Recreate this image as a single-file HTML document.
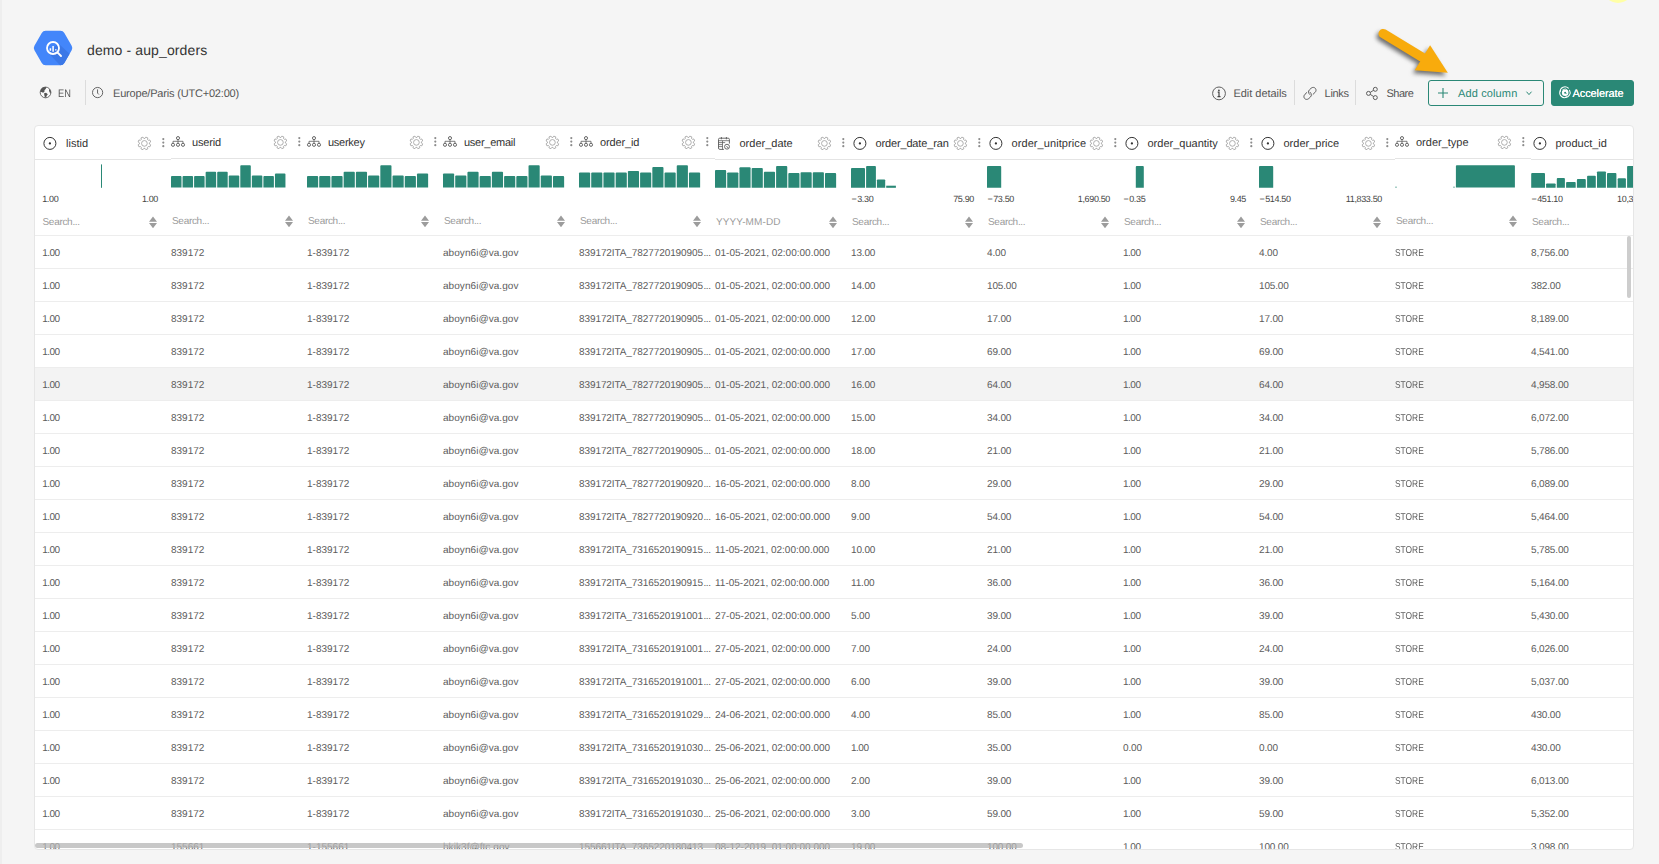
<!DOCTYPE html>
<html lang="en"><head><meta charset="utf-8"><title>demo - aup_orders</title>
<style>
html,body{margin:0;padding:0}
body{width:1659px;height:864px;overflow:hidden;background:#f5f5f5;font-family:'Liberation Sans', sans-serif;position:relative;color:#555;text-rendering:geometricPrecision}
.a{position:absolute;white-space:nowrap}
.strip{left:0;top:0;width:2px;height:864px;background:#eeeeee}
.title{left:87px;top:40.5px;font-size:14px;line-height:18px;color:#333;letter-spacing:0.12px}
.tb{font-size:11px;line-height:14px;top:87px;color:#555}
.vdiv{width:1px;background:#dcdcdc;top:80px;height:25px}
.btn{top:80px;height:24px;border:1px solid #2a8876;border-radius:3px;box-sizing:content-box}
.tbl{left:34px;top:125px;width:1598px;height:723px;border:1px solid #e6e6e6;border-radius:4px;background:#fff;overflow:hidden}
.hl{font-size:11px;line-height:14px;color:#333}
.mm{font-size:9px;line-height:12px;color:#444;letter-spacing:-0.35px}
.ms{margin-right:0.9px;color:#222}
.se{font-size:10px;line-height:12px;color:#9a9a9a;letter-spacing:-0.3px}
.row{left:0;width:1598px;height:32px;border-top:1px solid #ededed}
.c{position:absolute;top:1px;height:32px;line-height:33px;font-size:10px;color:#5c5c5c;white-space:nowrap}
.n{letter-spacing:-0.15px}
.n1{letter-spacing:-0.5px}
.u{transform:scaleX(0.84);transform-origin:0 0}
.e{letter-spacing:0.06px}
.d{letter-spacing:0px}
.o{letter-spacing:-0.09px}
.el{letter-spacing:-0.35px;margin-left:0.4px}
.hline{height:1px;background:#e4e4e4}

</style></head><body>
<div class="a strip"></div>
<div class="a" style="left:1603px;top:-27px;width:30px;height:30px;border-radius:50%;background:#ffffa6;filter:blur(0.7px)"></div>
<svg class="a" style="left:30px;top:27px" width="48" height="44" viewBox="30 27 48 44">
<defs><clipPath id="hexclip"><path d="M41.76 32.96Q43.05 30.70 45.65 30.70L60.45 30.70Q63.05 30.70 64.34 32.96L71.66 45.69Q72.95 47.95 71.66 50.21L64.34 62.94Q63.05 65.20 60.45 65.20L45.65 65.20Q43.05 65.20 41.76 62.94L34.44 50.21Q33.15 47.95 34.44 45.69Z"/></clipPath></defs>
<path d="M41.76 32.96Q43.05 30.70 45.65 30.70L60.45 30.70Q63.05 30.70 64.34 32.96L71.66 45.69Q72.95 47.95 71.66 50.21L64.34 62.94Q63.05 65.20 60.45 65.20L45.65 65.20Q43.05 65.20 41.76 62.94L34.44 50.21Q33.15 47.95 34.44 45.69Z" fill="#4386fa"/>
<g clip-path="url(#hexclip)"><path d="M48.6 53.2 L58.2 43.2 L80 63.6 L80 72 L66.5 72 Z" fill="#3b78e7"/></g>
<circle cx="53.0" cy="48.0" r="6.0" fill="none" stroke="#fff" stroke-width="1.8"/>
<path d="M57.7 52.7 L61.0 56.0" stroke="#fff" stroke-width="1.9" stroke-linecap="round"/>
<path d="M50.4 48.2V50.7M53.1 46.1V51.8M55.8 49.2V50.6" stroke="#fff" stroke-width="1.5"/>
</svg>
<div class="a title">demo - aup_orders</div>
<svg class="a" style="left:38px;top:85px" width="70" height="16" viewBox="38 85 70 16">
<circle cx="45.55" cy="92.45" r="5.35" fill="#fbfbfb" stroke="#5a5a5a" stroke-width="0.9"/>
<path d="M40.4 92.2L41 89L43 87.3L46.1 87L45.9 88.7L44.5 90.2L44.4 91.9L43 92.8L41.7 92Z" fill="#555"/>
<path d="M44.1 93.3L46 92.8L47.8 94.2L46.7 95.7L45.9 97.7L44.8 97L44.3 95.1Z" fill="#555"/>
<path d="M49.6 88.8L51 91.7L50.6 93.4L49.4 92L49 90.2Z" fill="#555"/>
<circle cx="97.6" cy="92.55" r="5.1" fill="none" stroke="#555" stroke-width="0.9"/>
<path d="M97.55 89.4V93.1L98.9 94.5" fill="none" stroke="#555" stroke-width="0.9"/>
</svg>
<div class="a tb" style="left:58.2px;transform:scaleX(0.84);transform-origin:0 0">EN</div>
<div class="a vdiv" style="left:85px"></div>
<div class="a tb" style="left:113px;letter-spacing:-0.19px">Europe/Paris (UTC+02:00)</div>
<svg class="a" style="left:1208px;top:83px" width="176" height="20" viewBox="1208 83 176 20">
<circle cx="1219" cy="93.4" r="6.4" fill="none" stroke="#555" stroke-width="0.95"/>
<circle cx="1218.9" cy="90.3" r="0.9" fill="#444"/><path d="M1217.7 92.2H1219V96.6M1217.5 96.7H1220.5" fill="none" stroke="#444" stroke-width="1.2"/>
<g transform="translate(1309.95 93.4) scale(0.9) translate(-1309.9 -93.45)" fill="none" stroke="#555" stroke-width="1.05" stroke-linecap="round"><path d="M1309.6 94.6C1307.9 93 1307.9 91 1309.3 89.5L1311.2 87.7C1312.8 86.3 1315 86.6 1316 88C1317 89.4 1316.8 91.2 1315.4 92.5L1313.4 94.4"/><path d="M1310.2 92.3C1311.9 93.9 1311.9 95.9 1310.5 97.4L1308.6 99.2C1307 100.6 1304.8 100.3 1303.8 98.9C1302.8 97.5 1303 95.7 1304.4 94.4L1306.4 92.5"/></g>
<g fill="none" stroke="#555" stroke-width="0.95"><circle cx="1375.3" cy="89.3" r="2"/><circle cx="1368.5" cy="93.4" r="2"/><circle cx="1375.3" cy="97.6" r="2"/><path d="M1370.2 92.4L1373.6 90.3M1370.2 94.4L1373.6 96.5"/></g>
</svg>
<div class="a tb" style="left:1233.5px;letter-spacing:-0.04px">Edit details</div>
<div class="a vdiv" style="left:1294px"></div>
<div class="a tb" style="left:1324.6px;letter-spacing:-0.3px">Links</div>
<div class="a vdiv" style="left:1355px"></div>
<div class="a tb" style="left:1386.4px;letter-spacing:-0.47px">Share</div>
<div class="a btn" style="left:1428px;width:114px;background:transparent"></div>
<svg class="a" style="left:1436px;top:86px" width="100" height="14" viewBox="0 0 100 14"><path d="M2 7H12M7 2V12" stroke="#2a8876" stroke-width="1.1" fill="none"/><path d="M90.5 5.7L93 8.6L95.5 5.7" stroke="#2a8876" stroke-width="1" fill="none"/></svg>
<div class="a tb" style="left:1458px;color:#2a8876;letter-spacing:0.13px">Add column</div>
<div class="a btn" style="left:1551px;width:81px;background:#2a8876"></div>
<svg class="a" style="left:1556px;top:84px" width="18" height="18" viewBox="1556 84 18 18"><g transform="translate(1564.9 92.7) scale(0.86) translate(-1565 -92.9)"><g fill="none" stroke="#fff" stroke-linecap="round"><circle cx="1565.3" cy="93.0" r="2.5" stroke-width="2.7"/><path d="M1569.0 87.7A5.5 5.3 0 0 0 1559.5 91.6" stroke-width="1.2"/><path d="M1559.6 90.6A5.6 5.6 0 0 0 1567.2 98.0" stroke-width="1.25"/><path d="M1570.4 90.0A5.4 5.4 0 0 1 1565.6 98.1" stroke-width="1.2"/><path d="M1562.6 89.2A4.4 4.4 0 0 1 1568.6 90.4" stroke-width="0.9"/></g><path d="M1566.3 94.4A1.6 1.6 0 0 0 1567.2 93.2" stroke="#2a8876" stroke-width="0.6" fill="none"/></g></svg>
<div class="a tb" style="left:1572.5px;color:#fff;letter-spacing:-0.1px;text-shadow:0 0 0.4px #fff">Accelerate</div>
<svg class="a" style="left:1360px;top:15px;filter:drop-shadow(-1.6px 3px 2px rgba(60,60,60,0.72))" width="110" height="75" viewBox="1360 15 110 75">
<path d="M1383.2 33.6 L1421.8 57" stroke="#f8ab0c" stroke-width="9.4" stroke-linecap="round" fill="none"/>
<path d="M1430.1 45.2 L1414.7 70.3 L1447.8 72.7 Z" fill="#f8ab0c"/>
</svg>
<div class="a tbl">
<svg class="a" style="left:0;top:0" width="1598" height="110" viewBox="35 126 1598 110">
<rect x="35" y="159" width="136" height="1" fill="#e4e4e4"/>
<circle cx="49.9" cy="143.4" r="6" fill="none" stroke="#333" stroke-width="1"/><circle cx="49.9" cy="143.4" r="1.15" fill="#333"/>
<path d="M144.97 138.43 L145.85 137.12 L147.82 137.93 L147.51 139.49 L148.31 140.29 L149.87 139.98 L150.68 141.95 L149.37 142.83 L149.37 143.97 L150.68 144.85 L149.87 146.82 L148.31 146.51 L147.51 147.31 L147.82 148.87 L145.85 149.68 L144.97 148.37 L143.83 148.37 L142.95 149.68 L140.98 148.87 L141.29 147.31 L140.49 146.51 L138.93 146.82 L138.12 144.85 L139.43 143.97 L139.43 142.83 L138.12 141.95 L138.93 139.98 L140.49 140.29 L141.29 139.49 L140.98 137.93 L142.95 137.12 L143.83 138.43Z" fill="none" stroke="#a6a6a6" stroke-width="0.9" stroke-linejoin="round"/><circle cx="144.4" cy="143.4" r="2.85" fill="none" stroke="#a6a6a6" stroke-width="0.9"/>
<circle cx="163.3" cy="139.04999999999998" r="1.1" fill="#8c8c8c"/><circle cx="163.3" cy="142.6" r="1.1" fill="#8c8c8c"/><circle cx="163.3" cy="146.15" r="1.1" fill="#8c8c8c"/>
<rect x="101.00" y="164.40" width="1.0" height="23.4" fill="#2a8876"/>
<path d="M149.0 221.70000000000002L153.0 216.6L157.0 221.70000000000002ZM149.0 223.1L153.0 228.20000000000002L157.0 223.1Z" fill="#9c9c9c"/>
<rect x="171" y="158" width="136" height="1" fill="#e4e4e4"/>
<g fill="none" stroke="#5e5e5e" stroke-width="0.95"><circle cx="178" cy="138.1" r="1.55"/><circle cx="173.0" cy="144.8" r="1.55"/><circle cx="178.0" cy="144.8" r="1.55"/><circle cx="183.0" cy="144.8" r="1.55"/><path d="M178 139.7V141.3M173.0 143.2V141.3H183.0V143.2M178 141.3V143.2" stroke-width="0.8"/></g>
<path d="M280.97 137.43 L281.85 136.12 L283.82 136.93 L283.51 138.49 L284.31 139.29 L285.87 138.98 L286.68 140.95 L285.37 141.83 L285.37 142.97 L286.68 143.85 L285.87 145.82 L284.31 145.51 L283.51 146.31 L283.82 147.87 L281.85 148.68 L280.97 147.37 L279.83 147.37 L278.95 148.68 L276.98 147.87 L277.29 146.31 L276.49 145.51 L274.93 145.82 L274.12 143.85 L275.43 142.97 L275.43 141.83 L274.12 140.95 L274.93 138.98 L276.49 139.29 L277.29 138.49 L276.98 136.93 L278.95 136.12 L279.83 137.43Z" fill="none" stroke="#a6a6a6" stroke-width="0.9" stroke-linejoin="round"/><circle cx="280.4" cy="142.4" r="2.85" fill="none" stroke="#a6a6a6" stroke-width="0.9"/>
<circle cx="299.3" cy="138.04999999999998" r="1.1" fill="#8c8c8c"/><circle cx="299.3" cy="141.6" r="1.1" fill="#8c8c8c"/><circle cx="299.3" cy="145.15" r="1.1" fill="#8c8c8c"/>
<path d="M171.00 187.40V176.90Q171.00 176.00 171.90 176.00H180.60Q181.50 176.00 181.50 176.90V187.40Z" fill="#2a8876"/>
<path d="M182.55 187.40V176.90Q182.55 176.00 183.45 176.00H192.15Q193.05 176.00 193.05 176.90V187.40Z" fill="#2a8876"/>
<path d="M194.10 187.40V176.90Q194.10 176.00 195.00 176.00H203.70Q204.60 176.00 204.60 176.90V187.40Z" fill="#2a8876"/>
<path d="M205.65 187.40V172.70Q205.65 171.80 206.55 171.80H215.25Q216.15 171.80 216.15 172.70V187.40Z" fill="#2a8876"/>
<path d="M217.20 187.40V172.70Q217.20 171.80 218.10 171.80H226.80Q227.70 171.80 227.70 172.70V187.40Z" fill="#2a8876"/>
<path d="M228.75 187.40V176.50Q228.75 175.60 229.65 175.60H238.35Q239.25 175.60 239.25 176.50V187.40Z" fill="#2a8876"/>
<path d="M240.30 187.40V166.10Q240.30 165.20 241.20 165.20H249.90Q250.80 165.20 250.80 166.10V187.40Z" fill="#2a8876"/>
<path d="M251.85 187.40V176.50Q251.85 175.60 252.75 175.60H261.45Q262.35 175.60 262.35 176.50V187.40Z" fill="#2a8876"/>
<path d="M263.40 187.40V176.90Q263.40 176.00 264.30 176.00H273.00Q273.90 176.00 273.90 176.90V187.40Z" fill="#2a8876"/>
<path d="M274.95 187.40V174.40Q274.95 173.50 275.85 173.50H284.55Q285.45 173.50 285.45 174.40V187.40Z" fill="#2a8876"/>
<path d="M285.0 220.70000000000002L289.0 215.6L293.0 220.70000000000002ZM285.0 222.1L289.0 227.20000000000002L293.0 222.1Z" fill="#9c9c9c"/>
<rect x="307" y="158" width="136" height="1" fill="#e4e4e4"/>
<g fill="none" stroke="#5e5e5e" stroke-width="0.95"><circle cx="314" cy="138.1" r="1.55"/><circle cx="309.0" cy="144.8" r="1.55"/><circle cx="314.0" cy="144.8" r="1.55"/><circle cx="319.0" cy="144.8" r="1.55"/><path d="M314 139.7V141.3M309.0 143.2V141.3H319.0V143.2M314 141.3V143.2" stroke-width="0.8"/></g>
<path d="M416.97 137.43 L417.85 136.12 L419.82 136.93 L419.51 138.49 L420.31 139.29 L421.87 138.98 L422.68 140.95 L421.37 141.83 L421.37 142.97 L422.68 143.85 L421.87 145.82 L420.31 145.51 L419.51 146.31 L419.82 147.87 L417.85 148.68 L416.97 147.37 L415.83 147.37 L414.95 148.68 L412.98 147.87 L413.29 146.31 L412.49 145.51 L410.93 145.82 L410.12 143.85 L411.43 142.97 L411.43 141.83 L410.12 140.95 L410.93 138.98 L412.49 139.29 L413.29 138.49 L412.98 136.93 L414.95 136.12 L415.83 137.43Z" fill="none" stroke="#a6a6a6" stroke-width="0.9" stroke-linejoin="round"/><circle cx="416.4" cy="142.4" r="2.85" fill="none" stroke="#a6a6a6" stroke-width="0.9"/>
<circle cx="435.3" cy="138.04999999999998" r="1.1" fill="#8c8c8c"/><circle cx="435.3" cy="141.6" r="1.1" fill="#8c8c8c"/><circle cx="435.3" cy="145.15" r="1.1" fill="#8c8c8c"/>
<path d="M307.00 187.40V176.90Q307.00 176.00 307.90 176.00H317.25Q318.15 176.00 318.15 176.90V187.40Z" fill="#2a8876"/>
<path d="M319.22 187.40V176.90Q319.22 176.00 320.12 176.00H329.47Q330.37 176.00 330.37 176.90V187.40Z" fill="#2a8876"/>
<path d="M331.44 187.40V176.90Q331.44 176.00 332.34 176.00H341.69Q342.59 176.00 342.59 176.90V187.40Z" fill="#2a8876"/>
<path d="M343.66 187.40V172.70Q343.66 171.80 344.56 171.80H353.91Q354.81 171.80 354.81 172.70V187.40Z" fill="#2a8876"/>
<path d="M355.88 187.40V172.70Q355.88 171.80 356.78 171.80H366.13Q367.03 171.80 367.03 172.70V187.40Z" fill="#2a8876"/>
<path d="M368.10 187.40V176.50Q368.10 175.60 369.00 175.60H378.35Q379.25 175.60 379.25 176.50V187.40Z" fill="#2a8876"/>
<path d="M380.32 187.40V166.10Q380.32 165.20 381.22 165.20H390.57Q391.47 165.20 391.47 166.10V187.40Z" fill="#2a8876"/>
<path d="M392.54 187.40V176.50Q392.54 175.60 393.44 175.60H402.79Q403.69 175.60 403.69 176.50V187.40Z" fill="#2a8876"/>
<path d="M404.76 187.40V176.90Q404.76 176.00 405.66 176.00H415.01Q415.91 176.00 415.91 176.90V187.40Z" fill="#2a8876"/>
<path d="M416.98 187.40V174.40Q416.98 173.50 417.88 173.50H427.23Q428.13 173.50 428.13 174.40V187.40Z" fill="#2a8876"/>
<path d="M421.0 220.70000000000002L425.0 215.6L429.0 220.70000000000002ZM421.0 222.1L425.0 227.20000000000002L429.0 222.1Z" fill="#9c9c9c"/>
<rect x="443" y="158" width="136" height="1" fill="#e4e4e4"/>
<g fill="none" stroke="#5e5e5e" stroke-width="0.95"><circle cx="450" cy="138.1" r="1.55"/><circle cx="445.0" cy="144.8" r="1.55"/><circle cx="450.0" cy="144.8" r="1.55"/><circle cx="455.0" cy="144.8" r="1.55"/><path d="M450 139.7V141.3M445.0 143.2V141.3H455.0V143.2M450 141.3V143.2" stroke-width="0.8"/></g>
<path d="M552.97 137.43 L553.85 136.12 L555.82 136.93 L555.51 138.49 L556.31 139.29 L557.87 138.98 L558.68 140.95 L557.37 141.83 L557.37 142.97 L558.68 143.85 L557.87 145.82 L556.31 145.51 L555.51 146.31 L555.82 147.87 L553.85 148.68 L552.97 147.37 L551.83 147.37 L550.95 148.68 L548.98 147.87 L549.29 146.31 L548.49 145.51 L546.93 145.82 L546.12 143.85 L547.43 142.97 L547.43 141.83 L546.12 140.95 L546.93 138.98 L548.49 139.29 L549.29 138.49 L548.98 136.93 L550.95 136.12 L551.83 137.43Z" fill="none" stroke="#a6a6a6" stroke-width="0.9" stroke-linejoin="round"/><circle cx="552.4" cy="142.4" r="2.85" fill="none" stroke="#a6a6a6" stroke-width="0.9"/>
<circle cx="571.3" cy="138.04999999999998" r="1.1" fill="#8c8c8c"/><circle cx="571.3" cy="141.6" r="1.1" fill="#8c8c8c"/><circle cx="571.3" cy="145.15" r="1.1" fill="#8c8c8c"/>
<path d="M443.00 187.40V174.40Q443.00 173.50 443.90 173.50H453.25Q454.15 173.50 454.15 174.40V187.40Z" fill="#2a8876"/>
<path d="M455.22 187.40V176.50Q455.22 175.60 456.12 175.60H465.47Q466.37 175.60 466.37 176.50V187.40Z" fill="#2a8876"/>
<path d="M467.44 187.40V172.70Q467.44 171.80 468.34 171.80H477.69Q478.59 171.80 478.59 172.70V187.40Z" fill="#2a8876"/>
<path d="M479.66 187.40V176.90Q479.66 176.00 480.56 176.00H489.91Q490.81 176.00 490.81 176.90V187.40Z" fill="#2a8876"/>
<path d="M491.88 187.40V172.70Q491.88 171.80 492.78 171.80H502.13Q503.03 171.80 503.03 172.70V187.40Z" fill="#2a8876"/>
<path d="M504.10 187.40V176.90Q504.10 176.00 505.00 176.00H514.35Q515.25 176.00 515.25 176.90V187.40Z" fill="#2a8876"/>
<path d="M516.32 187.40V176.90Q516.32 176.00 517.22 176.00H526.57Q527.47 176.00 527.47 176.90V187.40Z" fill="#2a8876"/>
<path d="M528.54 187.40V166.10Q528.54 165.20 529.44 165.20H538.79Q539.69 165.20 539.69 166.10V187.40Z" fill="#2a8876"/>
<path d="M540.76 187.40V176.50Q540.76 175.60 541.66 175.60H551.01Q551.91 175.60 551.91 176.50V187.40Z" fill="#2a8876"/>
<path d="M552.98 187.40V176.90Q552.98 176.00 553.88 176.00H563.23Q564.13 176.00 564.13 176.90V187.40Z" fill="#2a8876"/>
<path d="M557.0 220.70000000000002L561.0 215.6L565.0 220.70000000000002ZM557.0 222.1L561.0 227.20000000000002L565.0 222.1Z" fill="#9c9c9c"/>
<rect x="579" y="158" width="136" height="1" fill="#e4e4e4"/>
<g fill="none" stroke="#5e5e5e" stroke-width="0.95"><circle cx="586" cy="138.1" r="1.55"/><circle cx="581.0" cy="144.8" r="1.55"/><circle cx="586.0" cy="144.8" r="1.55"/><circle cx="591.0" cy="144.8" r="1.55"/><path d="M586 139.7V141.3M581.0 143.2V141.3H591.0V143.2M586 141.3V143.2" stroke-width="0.8"/></g>
<path d="M688.97 137.43 L689.85 136.12 L691.82 136.93 L691.51 138.49 L692.31 139.29 L693.87 138.98 L694.68 140.95 L693.37 141.83 L693.37 142.97 L694.68 143.85 L693.87 145.82 L692.31 145.51 L691.51 146.31 L691.82 147.87 L689.85 148.68 L688.97 147.37 L687.83 147.37 L686.95 148.68 L684.98 147.87 L685.29 146.31 L684.49 145.51 L682.93 145.82 L682.12 143.85 L683.43 142.97 L683.43 141.83 L682.12 140.95 L682.93 138.98 L684.49 139.29 L685.29 138.49 L684.98 136.93 L686.95 136.12 L687.83 137.43Z" fill="none" stroke="#a6a6a6" stroke-width="0.9" stroke-linejoin="round"/><circle cx="688.4" cy="142.4" r="2.85" fill="none" stroke="#a6a6a6" stroke-width="0.9"/>
<circle cx="707.3" cy="138.04999999999998" r="1.1" fill="#8c8c8c"/><circle cx="707.3" cy="141.6" r="1.1" fill="#8c8c8c"/><circle cx="707.3" cy="145.15" r="1.1" fill="#8c8c8c"/>
<path d="M579.00 187.40V173.50Q579.00 172.60 579.90 172.60H589.25Q590.15 172.60 590.15 173.50V187.40Z" fill="#2a8876"/>
<path d="M591.22 187.40V173.50Q591.22 172.60 592.12 172.60H601.47Q602.37 172.60 602.37 173.50V187.40Z" fill="#2a8876"/>
<path d="M603.44 187.40V173.50Q603.44 172.60 604.34 172.60H613.69Q614.59 172.60 614.59 173.50V187.40Z" fill="#2a8876"/>
<path d="M615.66 187.40V173.50Q615.66 172.60 616.56 172.60H625.91Q626.81 172.60 626.81 173.50V187.40Z" fill="#2a8876"/>
<path d="M627.88 187.40V171.80Q627.88 170.90 628.78 170.90H638.13Q639.03 170.90 639.03 171.80V187.40Z" fill="#2a8876"/>
<path d="M640.10 187.40V173.50Q640.10 172.60 641.00 172.60H650.35Q651.25 172.60 651.25 173.50V187.40Z" fill="#2a8876"/>
<path d="M652.32 187.40V168.00Q652.32 167.10 653.22 167.10H662.57Q663.47 167.10 663.47 168.00V187.40Z" fill="#2a8876"/>
<path d="M664.54 187.40V173.50Q664.54 172.60 665.44 172.60H674.79Q675.69 172.60 675.69 173.50V187.40Z" fill="#2a8876"/>
<path d="M676.76 187.40V166.10Q676.76 165.20 677.66 165.20H687.01Q687.91 165.20 687.91 166.10V187.40Z" fill="#2a8876"/>
<path d="M688.98 187.40V173.50Q688.98 172.60 689.88 172.60H699.23Q700.13 172.60 700.13 173.50V187.40Z" fill="#2a8876"/>
<path d="M693.0 220.70000000000002L697.0 215.6L701.0 220.70000000000002ZM693.0 222.1L697.0 227.20000000000002L701.0 222.1Z" fill="#9c9c9c"/>
<rect x="715" y="159" width="136" height="1" fill="#e4e4e4"/>
<g transform="translate(0 0)" fill="none" stroke="#5a5a5a" stroke-width="0.9"><path d="M729.4 143.6V139.4a1.2 1.2 0 0 0 -1.2 -1.2H719.7a1.2 1.2 0 0 0 -1.2 1.2V148a1.4 1.4 0 0 0 1.4 1.4H723.9"/><path d="M721.4 137V139.3M726.4 137V139.3"/><path d="M718.5 140.7H729.4M718.5 142.6H725.2M718.5 144.6H722.5M718.5 146.6H722.5M722.5 140.7V149.4" stroke-width="0.75"/><circle cx="727" cy="146.7" r="2.45"/><path d="M726.6 146.2L728.1 147.9" stroke-width="1"/></g>
<path d="M824.97 138.43 L825.85 137.12 L827.82 137.93 L827.51 139.49 L828.31 140.29 L829.87 139.98 L830.68 141.95 L829.37 142.83 L829.37 143.97 L830.68 144.85 L829.87 146.82 L828.31 146.51 L827.51 147.31 L827.82 148.87 L825.85 149.68 L824.97 148.37 L823.83 148.37 L822.95 149.68 L820.98 148.87 L821.29 147.31 L820.49 146.51 L818.93 146.82 L818.12 144.85 L819.43 143.97 L819.43 142.83 L818.12 141.95 L818.93 139.98 L820.49 140.29 L821.29 139.49 L820.98 137.93 L822.95 137.12 L823.83 138.43Z" fill="none" stroke="#a6a6a6" stroke-width="0.9" stroke-linejoin="round"/><circle cx="824.4" cy="143.4" r="2.85" fill="none" stroke="#a6a6a6" stroke-width="0.9"/>
<circle cx="843.3" cy="139.04999999999998" r="1.1" fill="#8c8c8c"/><circle cx="843.3" cy="142.6" r="1.1" fill="#8c8c8c"/><circle cx="843.3" cy="146.15" r="1.1" fill="#8c8c8c"/>
<path d="M715.00 187.80V171.00Q715.00 170.10 715.90 170.10H725.25Q726.15 170.10 726.15 171.00V187.80Z" fill="#2a8876"/>
<path d="M727.22 187.80V173.30Q727.22 172.40 728.12 172.40H737.47Q738.37 172.40 738.37 173.30V187.80Z" fill="#2a8876"/>
<path d="M739.44 187.80V168.20Q739.44 167.30 740.34 167.30H749.69Q750.59 167.30 750.59 168.20V187.80Z" fill="#2a8876"/>
<path d="M751.66 187.80V169.00Q751.66 168.10 752.56 168.10H761.91Q762.81 168.10 762.81 169.00V187.80Z" fill="#2a8876"/>
<path d="M763.88 187.80V172.70Q763.88 171.80 764.78 171.80H774.13Q775.03 171.80 775.03 172.70V187.80Z" fill="#2a8876"/>
<path d="M776.10 187.80V167.00Q776.10 166.10 777.00 166.10H786.35Q787.25 166.10 787.25 167.00V187.80Z" fill="#2a8876"/>
<path d="M788.32 187.80V173.90Q788.32 173.00 789.22 173.00H798.57Q799.47 173.00 799.47 173.90V187.80Z" fill="#2a8876"/>
<path d="M800.54 187.80V173.10Q800.54 172.20 801.44 172.20H810.79Q811.69 172.20 811.69 173.10V187.80Z" fill="#2a8876"/>
<path d="M812.76 187.80V173.10Q812.76 172.20 813.66 172.20H823.01Q823.91 172.20 823.91 173.10V187.80Z" fill="#2a8876"/>
<path d="M824.98 187.80V173.90Q824.98 173.00 825.88 173.00H835.23Q836.13 173.00 836.13 173.90V187.80Z" fill="#2a8876"/>
<path d="M829.0 221.70000000000002L833.0 216.6L837.0 221.70000000000002ZM829.0 223.1L833.0 228.20000000000002L837.0 223.1Z" fill="#9c9c9c"/>
<rect x="851" y="159" width="136" height="1" fill="#e4e4e4"/>
<circle cx="859.9" cy="143.4" r="6" fill="none" stroke="#333" stroke-width="1"/><circle cx="859.9" cy="143.4" r="1.15" fill="#333"/>
<path d="M960.97 138.43 L961.85 137.12 L963.82 137.93 L963.51 139.49 L964.31 140.29 L965.87 139.98 L966.68 141.95 L965.37 142.83 L965.37 143.97 L966.68 144.85 L965.87 146.82 L964.31 146.51 L963.51 147.31 L963.82 148.87 L961.85 149.68 L960.97 148.37 L959.83 148.37 L958.95 149.68 L956.98 148.87 L957.29 147.31 L956.49 146.51 L954.93 146.82 L954.12 144.85 L955.43 143.97 L955.43 142.83 L954.12 141.95 L954.93 139.98 L956.49 140.29 L957.29 139.49 L956.98 137.93 L958.95 137.12 L959.83 138.43Z" fill="none" stroke="#a6a6a6" stroke-width="0.9" stroke-linejoin="round"/><circle cx="960.4" cy="143.4" r="2.85" fill="none" stroke="#a6a6a6" stroke-width="0.9"/>
<circle cx="979.3" cy="139.04999999999998" r="1.1" fill="#8c8c8c"/><circle cx="979.3" cy="142.6" r="1.1" fill="#8c8c8c"/><circle cx="979.3" cy="146.15" r="1.1" fill="#8c8c8c"/>
<path d="M851.00 187.80V169.00Q851.00 168.10 851.90 168.10H864.10Q865.00 168.10 865.00 169.00V187.80Z" fill="#2a8876"/>
<path d="M866.10 187.80V167.00Q866.10 166.10 867.00 166.10H875.00Q875.90 166.10 875.90 167.00V187.80Z" fill="#2a8876"/>
<path d="M876.90 187.80V180.30Q876.90 179.40 877.80 179.40H884.30Q885.20 179.40 885.20 180.30V187.80Z" fill="#2a8876"/>
<rect x="886.20" y="185.70" width="9.7" height="2.1" fill="#2a8876"/>
<path d="M965.0 221.70000000000002L969.0 216.6L973.0 221.70000000000002ZM965.0 223.1L969.0 228.20000000000002L973.0 223.1Z" fill="#9c9c9c"/>
<rect x="987" y="159" width="136" height="1" fill="#e4e4e4"/>
<circle cx="995.9" cy="143.4" r="6" fill="none" stroke="#333" stroke-width="1"/><circle cx="995.9" cy="143.4" r="1.15" fill="#333"/>
<path d="M1096.97 138.43 L1097.85 137.12 L1099.82 137.93 L1099.51 139.49 L1100.31 140.29 L1101.87 139.98 L1102.68 141.95 L1101.37 142.83 L1101.37 143.97 L1102.68 144.85 L1101.87 146.82 L1100.31 146.51 L1099.51 147.31 L1099.82 148.87 L1097.85 149.68 L1096.97 148.37 L1095.83 148.37 L1094.95 149.68 L1092.98 148.87 L1093.29 147.31 L1092.49 146.51 L1090.93 146.82 L1090.12 144.85 L1091.43 143.97 L1091.43 142.83 L1090.12 141.95 L1090.93 139.98 L1092.49 140.29 L1093.29 139.49 L1092.98 137.93 L1094.95 137.12 L1095.83 138.43Z" fill="none" stroke="#a6a6a6" stroke-width="0.9" stroke-linejoin="round"/><circle cx="1096.4" cy="143.4" r="2.85" fill="none" stroke="#a6a6a6" stroke-width="0.9"/>
<circle cx="1115.3" cy="139.04999999999998" r="1.1" fill="#8c8c8c"/><circle cx="1115.3" cy="142.6" r="1.1" fill="#8c8c8c"/><circle cx="1115.3" cy="146.15" r="1.1" fill="#8c8c8c"/>
<path d="M987.00 187.80V167.00Q987.00 166.10 987.90 166.10H1000.30Q1001.20 166.10 1001.20 167.00V187.80Z" fill="#2a8876"/>
<path d="M1101.0 221.70000000000002L1105.0 216.6L1109.0 221.70000000000002ZM1101.0 223.1L1105.0 228.20000000000002L1109.0 223.1Z" fill="#9c9c9c"/>
<rect x="1123" y="159" width="136" height="1" fill="#e4e4e4"/>
<circle cx="1131.9" cy="143.4" r="6" fill="none" stroke="#333" stroke-width="1"/><circle cx="1131.9" cy="143.4" r="1.15" fill="#333"/>
<path d="M1232.97 138.43 L1233.85 137.12 L1235.82 137.93 L1235.51 139.49 L1236.31 140.29 L1237.87 139.98 L1238.68 141.95 L1237.37 142.83 L1237.37 143.97 L1238.68 144.85 L1237.87 146.82 L1236.31 146.51 L1235.51 147.31 L1235.82 148.87 L1233.85 149.68 L1232.97 148.37 L1231.83 148.37 L1230.95 149.68 L1228.98 148.87 L1229.29 147.31 L1228.49 146.51 L1226.93 146.82 L1226.12 144.85 L1227.43 143.97 L1227.43 142.83 L1226.12 141.95 L1226.93 139.98 L1228.49 140.29 L1229.29 139.49 L1228.98 137.93 L1230.95 137.12 L1231.83 138.43Z" fill="none" stroke="#a6a6a6" stroke-width="0.9" stroke-linejoin="round"/><circle cx="1232.4" cy="143.4" r="2.85" fill="none" stroke="#a6a6a6" stroke-width="0.9"/>
<circle cx="1251.3" cy="139.04999999999998" r="1.1" fill="#8c8c8c"/><circle cx="1251.3" cy="142.6" r="1.1" fill="#8c8c8c"/><circle cx="1251.3" cy="146.15" r="1.1" fill="#8c8c8c"/>
<path d="M1135.80 187.80V167.00Q1135.80 166.10 1136.70 166.10H1142.90Q1143.80 166.10 1143.80 167.00V187.80Z" fill="#2a8876"/>
<path d="M1237.0 221.70000000000002L1241.0 216.6L1245.0 221.70000000000002ZM1237.0 223.1L1241.0 228.20000000000002L1245.0 223.1Z" fill="#9c9c9c"/>
<rect x="1259" y="159" width="136" height="1" fill="#e4e4e4"/>
<circle cx="1267.9" cy="143.4" r="6" fill="none" stroke="#333" stroke-width="1"/><circle cx="1267.9" cy="143.4" r="1.15" fill="#333"/>
<path d="M1368.97 138.43 L1369.85 137.12 L1371.82 137.93 L1371.51 139.49 L1372.31 140.29 L1373.87 139.98 L1374.68 141.95 L1373.37 142.83 L1373.37 143.97 L1374.68 144.85 L1373.87 146.82 L1372.31 146.51 L1371.51 147.31 L1371.82 148.87 L1369.85 149.68 L1368.97 148.37 L1367.83 148.37 L1366.95 149.68 L1364.98 148.87 L1365.29 147.31 L1364.49 146.51 L1362.93 146.82 L1362.12 144.85 L1363.43 143.97 L1363.43 142.83 L1362.12 141.95 L1362.93 139.98 L1364.49 140.29 L1365.29 139.49 L1364.98 137.93 L1366.95 137.12 L1367.83 138.43Z" fill="none" stroke="#a6a6a6" stroke-width="0.9" stroke-linejoin="round"/><circle cx="1368.4" cy="143.4" r="2.85" fill="none" stroke="#a6a6a6" stroke-width="0.9"/>
<circle cx="1387.3" cy="139.04999999999998" r="1.1" fill="#8c8c8c"/><circle cx="1387.3" cy="142.6" r="1.1" fill="#8c8c8c"/><circle cx="1387.3" cy="146.15" r="1.1" fill="#8c8c8c"/>
<path d="M1259.00 187.80V167.00Q1259.00 166.10 1259.90 166.10H1272.30Q1273.20 166.10 1273.20 167.00V187.80Z" fill="#2a8876"/>
<path d="M1373.0 221.70000000000002L1377.0 216.6L1381.0 221.70000000000002ZM1373.0 223.1L1377.0 228.20000000000002L1381.0 223.1Z" fill="#9c9c9c"/>
<rect x="1395" y="158" width="136" height="1" fill="#e4e4e4"/>
<g fill="none" stroke="#5e5e5e" stroke-width="0.95"><circle cx="1402" cy="138.1" r="1.55"/><circle cx="1397.0" cy="144.8" r="1.55"/><circle cx="1402.0" cy="144.8" r="1.55"/><circle cx="1407.0" cy="144.8" r="1.55"/><path d="M1402 139.7V141.3M1397.0 143.2V141.3H1407.0V143.2M1402 141.3V143.2" stroke-width="0.8"/></g>
<path d="M1504.97 137.43 L1505.85 136.12 L1507.82 136.93 L1507.51 138.49 L1508.31 139.29 L1509.87 138.98 L1510.68 140.95 L1509.37 141.83 L1509.37 142.97 L1510.68 143.85 L1509.87 145.82 L1508.31 145.51 L1507.51 146.31 L1507.82 147.87 L1505.85 148.68 L1504.97 147.37 L1503.83 147.37 L1502.95 148.68 L1500.98 147.87 L1501.29 146.31 L1500.49 145.51 L1498.93 145.82 L1498.12 143.85 L1499.43 142.97 L1499.43 141.83 L1498.12 140.95 L1498.93 138.98 L1500.49 139.29 L1501.29 138.49 L1500.98 136.93 L1502.95 136.12 L1503.83 137.43Z" fill="none" stroke="#a6a6a6" stroke-width="0.9" stroke-linejoin="round"/><circle cx="1504.4" cy="142.4" r="2.85" fill="none" stroke="#a6a6a6" stroke-width="0.9"/>
<circle cx="1523.3" cy="138.04999999999998" r="1.1" fill="#8c8c8c"/><circle cx="1523.3" cy="141.6" r="1.1" fill="#8c8c8c"/><circle cx="1523.3" cy="145.15" r="1.1" fill="#8c8c8c"/>
<rect x="1395.00" y="186.80" width="2" height="0.6" fill="#2a8876"/>
<rect x="1453.00" y="186.80" width="2" height="0.6" fill="#2a8876"/>
<path d="M1455.90 187.40V166.10Q1455.90 165.20 1456.80 165.20H1514.00Q1514.90 165.20 1514.90 166.10V187.40Z" fill="#2a8876"/>
<path d="M1509.0 220.70000000000002L1513.0 215.6L1517.0 220.70000000000002ZM1509.0 222.1L1513.0 227.20000000000002L1517.0 222.1Z" fill="#9c9c9c"/>
<rect x="1531" y="159" width="136" height="1" fill="#e4e4e4"/>
<circle cx="1539.9" cy="143.4" r="6" fill="none" stroke="#333" stroke-width="1"/><circle cx="1539.9" cy="143.4" r="1.15" fill="#333"/>
<path d="M1640.97 138.43 L1641.85 137.12 L1643.82 137.93 L1643.51 139.49 L1644.31 140.29 L1645.87 139.98 L1646.68 141.95 L1645.37 142.83 L1645.37 143.97 L1646.68 144.85 L1645.87 146.82 L1644.31 146.51 L1643.51 147.31 L1643.82 148.87 L1641.85 149.68 L1640.97 148.37 L1639.83 148.37 L1638.95 149.68 L1636.98 148.87 L1637.29 147.31 L1636.49 146.51 L1634.93 146.82 L1634.12 144.85 L1635.43 143.97 L1635.43 142.83 L1634.12 141.95 L1634.93 139.98 L1636.49 140.29 L1637.29 139.49 L1636.98 137.93 L1638.95 137.12 L1639.83 138.43Z" fill="none" stroke="#a6a6a6" stroke-width="0.9" stroke-linejoin="round"/><circle cx="1640.4" cy="143.4" r="2.85" fill="none" stroke="#a6a6a6" stroke-width="0.9"/>
<circle cx="1659.3" cy="139.04999999999998" r="1.1" fill="#8c8c8c"/><circle cx="1659.3" cy="142.6" r="1.1" fill="#8c8c8c"/><circle cx="1659.3" cy="146.15" r="1.1" fill="#8c8c8c"/>
<path d="M1531.20 187.80V173.90Q1531.20 173.00 1532.10 173.00H1544.10Q1545.00 173.00 1545.00 173.90V187.80Z" fill="#2a8876"/>
<path d="M1546.10 187.80V184.30Q1546.10 183.40 1547.00 183.40H1554.70Q1555.60 183.40 1555.60 184.30V187.80Z" fill="#2a8876"/>
<path d="M1556.80 187.80V178.90Q1556.80 178.00 1557.70 178.00H1564.00Q1564.90 178.00 1564.90 178.90V187.80Z" fill="#2a8876"/>
<path d="M1566.10 187.80V183.00Q1566.10 182.10 1567.00 182.10H1574.80Q1575.70 182.10 1575.70 183.00V187.80Z" fill="#2a8876"/>
<path d="M1576.90 187.80V180.00Q1576.90 179.10 1577.80 179.10H1584.90Q1585.80 179.10 1585.80 180.00V187.80Z" fill="#2a8876"/>
<path d="M1587.10 187.80V176.70Q1587.10 175.80 1588.00 175.80H1594.90Q1595.80 175.80 1595.80 176.70V187.80Z" fill="#2a8876"/>
<path d="M1597.00 187.80V172.30Q1597.00 171.40 1597.90 171.40H1605.00Q1605.90 171.40 1605.90 172.30V187.80Z" fill="#2a8876"/>
<path d="M1607.00 187.80V173.90Q1607.00 173.00 1607.90 173.00H1615.50Q1616.40 173.00 1616.40 173.90V187.80Z" fill="#2a8876"/>
<path d="M1617.70 187.80V179.20Q1617.70 178.30 1618.60 178.30H1625.00Q1625.90 178.30 1625.90 179.20V187.80Z" fill="#2a8876"/>
<path d="M1627.10 187.80V167.00Q1627.10 166.10 1628.00 166.10H1635.20Q1636.10 166.10 1636.10 167.00V187.80Z" fill="#2a8876"/>
<path d="M1645.0 221.70000000000002L1649.0 216.6L1653.0 221.70000000000002ZM1645.0 223.1L1649.0 228.20000000000002L1653.0 223.1Z" fill="#9c9c9c"/>
</svg>
<div class="a hl" style="left:31px;top:11px;letter-spacing:0px">listid</div>
<div class="a mm" style="left:7.200000000000003px;top:66.5px">1.00</div>
<div class="a mm" style="left:23px;width:100px;text-align:right;top:66.5px">1.00</div>
<div class="a se" style="left:7.5px;top:91px">Search...</div>
<div class="a hl" style="left:157px;top:10px;letter-spacing:-0.15px">userid</div>
<div class="a se" style="left:137px;top:90px">Search...</div>
<div class="a hl" style="left:293px;top:10px;letter-spacing:-0.27px">userkey</div>
<div class="a se" style="left:273px;top:90px">Search...</div>
<div class="a hl" style="left:429px;top:10px;letter-spacing:-0.27px">user_email</div>
<div class="a se" style="left:409px;top:90px">Search...</div>
<div class="a hl" style="left:565px;top:10px;letter-spacing:-0.15px">order_id</div>
<div class="a se" style="left:545px;top:90px">Search...</div>
<div class="a hl" style="left:704.5px;top:11px;letter-spacing:0px">order_date</div>
<div class="a se" style="left:681px;top:91px;letter-spacing:0.1px">YYYY-MM-DD</div>
<div class="a hl" style="left:840.5px;top:11px;letter-spacing:-0.15px">order_date_ran</div>
<div class="a mm" style="left:816.4px;top:66.5px"><span class="ms">−</span>3.30</div>
<div class="a mm" style="left:839px;width:100px;text-align:right;top:66.5px">75.90</div>
<div class="a se" style="left:817px;top:91px">Search...</div>
<div class="a hl" style="left:976.5px;top:11px;letter-spacing:0.08px">order_unitprice</div>
<div class="a mm" style="left:952.4px;top:66.5px"><span class="ms">−</span>73.50</div>
<div class="a mm" style="left:975px;width:100px;text-align:right;top:66.5px">1,690.50</div>
<div class="a se" style="left:953px;top:91px">Search...</div>
<div class="a hl" style="left:1112.5px;top:11px;letter-spacing:0px">order_quantity</div>
<div class="a mm" style="left:1088.4px;top:66.5px"><span class="ms">−</span>0.35</div>
<div class="a mm" style="left:1111px;width:100px;text-align:right;top:66.5px">9.45</div>
<div class="a se" style="left:1089px;top:91px">Search...</div>
<div class="a hl" style="left:1248.5px;top:11px;letter-spacing:0px">order_price</div>
<div class="a mm" style="left:1224.4px;top:66.5px"><span class="ms">−</span>514.50</div>
<div class="a mm" style="left:1247px;width:100px;text-align:right;top:66.5px">11,833.50</div>
<div class="a se" style="left:1225px;top:91px">Search...</div>
<div class="a hl" style="left:1381px;top:10px;letter-spacing:0px">order_type</div>
<div class="a se" style="left:1361px;top:90px">Search...</div>
<div class="a hl" style="left:1520.5px;top:11px;letter-spacing:0px">product_id</div>
<div class="a mm" style="left:1496.4px;top:66.5px"><span class="ms">−</span>451.10</div>
<div class="a mm" style="left:1519px;width:100px;text-align:right;top:66.5px">10,397.90</div>
<div class="a se" style="left:1497px;top:91px">Search...</div>
<div class="a row" style="top:109px">
<span class="c n1" style="left:7.200000000000003px">1.00</span>
<span class="c " style="left:136px">839172</span>
<span class="c " style="left:272px">1-839172</span>
<span class="c e" style="left:408px">aboyn6i@va.gov</span>
<span class="c o" style="left:544px">839172ITA_7827720190905<span class="el">...</span></span>
<span class="c d" style="left:680px">01-05-2021, 02:00:00.000</span>
<span class="c n" style="left:816px">13.00</span>
<span class="c n" style="left:952px">4.00</span>
<span class="c n1" style="left:1088px">1.00</span>
<span class="c n" style="left:1224px">4.00</span>
<span class="c u" style="left:1360px">STORE</span>
<span class="c n" style="left:1496px">8,756.00</span>
</div>
<div class="a row" style="top:142px">
<span class="c n1" style="left:7.200000000000003px">1.00</span>
<span class="c " style="left:136px">839172</span>
<span class="c " style="left:272px">1-839172</span>
<span class="c e" style="left:408px">aboyn6i@va.gov</span>
<span class="c o" style="left:544px">839172ITA_7827720190905<span class="el">...</span></span>
<span class="c d" style="left:680px">01-05-2021, 02:00:00.000</span>
<span class="c n" style="left:816px">14.00</span>
<span class="c n" style="left:952px">105.00</span>
<span class="c n1" style="left:1088px">1.00</span>
<span class="c n" style="left:1224px">105.00</span>
<span class="c u" style="left:1360px">STORE</span>
<span class="c n" style="left:1496px">382.00</span>
</div>
<div class="a row" style="top:175px">
<span class="c n1" style="left:7.200000000000003px">1.00</span>
<span class="c " style="left:136px">839172</span>
<span class="c " style="left:272px">1-839172</span>
<span class="c e" style="left:408px">aboyn6i@va.gov</span>
<span class="c o" style="left:544px">839172ITA_7827720190905<span class="el">...</span></span>
<span class="c d" style="left:680px">01-05-2021, 02:00:00.000</span>
<span class="c n" style="left:816px">12.00</span>
<span class="c n" style="left:952px">17.00</span>
<span class="c n1" style="left:1088px">1.00</span>
<span class="c n" style="left:1224px">17.00</span>
<span class="c u" style="left:1360px">STORE</span>
<span class="c n" style="left:1496px">8,189.00</span>
</div>
<div class="a row" style="top:208px">
<span class="c n1" style="left:7.200000000000003px">1.00</span>
<span class="c " style="left:136px">839172</span>
<span class="c " style="left:272px">1-839172</span>
<span class="c e" style="left:408px">aboyn6i@va.gov</span>
<span class="c o" style="left:544px">839172ITA_7827720190905<span class="el">...</span></span>
<span class="c d" style="left:680px">01-05-2021, 02:00:00.000</span>
<span class="c n" style="left:816px">17.00</span>
<span class="c n" style="left:952px">69.00</span>
<span class="c n1" style="left:1088px">1.00</span>
<span class="c n" style="left:1224px">69.00</span>
<span class="c u" style="left:1360px">STORE</span>
<span class="c n" style="left:1496px">4,541.00</span>
</div>
<div class="a row" style="top:241px;background:#f3f3f3">
<span class="c n1" style="left:7.200000000000003px">1.00</span>
<span class="c " style="left:136px">839172</span>
<span class="c " style="left:272px">1-839172</span>
<span class="c e" style="left:408px">aboyn6i@va.gov</span>
<span class="c o" style="left:544px">839172ITA_7827720190905<span class="el">...</span></span>
<span class="c d" style="left:680px">01-05-2021, 02:00:00.000</span>
<span class="c n" style="left:816px">16.00</span>
<span class="c n" style="left:952px">64.00</span>
<span class="c n1" style="left:1088px">1.00</span>
<span class="c n" style="left:1224px">64.00</span>
<span class="c u" style="left:1360px">STORE</span>
<span class="c n" style="left:1496px">4,958.00</span>
</div>
<div class="a row" style="top:274px">
<span class="c n1" style="left:7.200000000000003px">1.00</span>
<span class="c " style="left:136px">839172</span>
<span class="c " style="left:272px">1-839172</span>
<span class="c e" style="left:408px">aboyn6i@va.gov</span>
<span class="c o" style="left:544px">839172ITA_7827720190905<span class="el">...</span></span>
<span class="c d" style="left:680px">01-05-2021, 02:00:00.000</span>
<span class="c n" style="left:816px">15.00</span>
<span class="c n" style="left:952px">34.00</span>
<span class="c n1" style="left:1088px">1.00</span>
<span class="c n" style="left:1224px">34.00</span>
<span class="c u" style="left:1360px">STORE</span>
<span class="c n" style="left:1496px">6,072.00</span>
</div>
<div class="a row" style="top:307px">
<span class="c n1" style="left:7.200000000000003px">1.00</span>
<span class="c " style="left:136px">839172</span>
<span class="c " style="left:272px">1-839172</span>
<span class="c e" style="left:408px">aboyn6i@va.gov</span>
<span class="c o" style="left:544px">839172ITA_7827720190905<span class="el">...</span></span>
<span class="c d" style="left:680px">01-05-2021, 02:00:00.000</span>
<span class="c n" style="left:816px">18.00</span>
<span class="c n" style="left:952px">21.00</span>
<span class="c n1" style="left:1088px">1.00</span>
<span class="c n" style="left:1224px">21.00</span>
<span class="c u" style="left:1360px">STORE</span>
<span class="c n" style="left:1496px">5,786.00</span>
</div>
<div class="a row" style="top:340px">
<span class="c n1" style="left:7.200000000000003px">1.00</span>
<span class="c " style="left:136px">839172</span>
<span class="c " style="left:272px">1-839172</span>
<span class="c e" style="left:408px">aboyn6i@va.gov</span>
<span class="c o" style="left:544px">839172ITA_7827720190920<span class="el">...</span></span>
<span class="c d" style="left:680px">16-05-2021, 02:00:00.000</span>
<span class="c n" style="left:816px">8.00</span>
<span class="c n" style="left:952px">29.00</span>
<span class="c n1" style="left:1088px">1.00</span>
<span class="c n" style="left:1224px">29.00</span>
<span class="c u" style="left:1360px">STORE</span>
<span class="c n" style="left:1496px">6,089.00</span>
</div>
<div class="a row" style="top:373px">
<span class="c n1" style="left:7.200000000000003px">1.00</span>
<span class="c " style="left:136px">839172</span>
<span class="c " style="left:272px">1-839172</span>
<span class="c e" style="left:408px">aboyn6i@va.gov</span>
<span class="c o" style="left:544px">839172ITA_7827720190920<span class="el">...</span></span>
<span class="c d" style="left:680px">16-05-2021, 02:00:00.000</span>
<span class="c n" style="left:816px">9.00</span>
<span class="c n" style="left:952px">54.00</span>
<span class="c n1" style="left:1088px">1.00</span>
<span class="c n" style="left:1224px">54.00</span>
<span class="c u" style="left:1360px">STORE</span>
<span class="c n" style="left:1496px">5,464.00</span>
</div>
<div class="a row" style="top:406px">
<span class="c n1" style="left:7.200000000000003px">1.00</span>
<span class="c " style="left:136px">839172</span>
<span class="c " style="left:272px">1-839172</span>
<span class="c e" style="left:408px">aboyn6i@va.gov</span>
<span class="c o" style="left:544px">839172ITA_7316520190915<span class="el">...</span></span>
<span class="c d" style="left:680px">11-05-2021, 02:00:00.000</span>
<span class="c n" style="left:816px">10.00</span>
<span class="c n" style="left:952px">21.00</span>
<span class="c n1" style="left:1088px">1.00</span>
<span class="c n" style="left:1224px">21.00</span>
<span class="c u" style="left:1360px">STORE</span>
<span class="c n" style="left:1496px">5,785.00</span>
</div>
<div class="a row" style="top:439px">
<span class="c n1" style="left:7.200000000000003px">1.00</span>
<span class="c " style="left:136px">839172</span>
<span class="c " style="left:272px">1-839172</span>
<span class="c e" style="left:408px">aboyn6i@va.gov</span>
<span class="c o" style="left:544px">839172ITA_7316520190915<span class="el">...</span></span>
<span class="c d" style="left:680px">11-05-2021, 02:00:00.000</span>
<span class="c n" style="left:816px">11.00</span>
<span class="c n" style="left:952px">36.00</span>
<span class="c n1" style="left:1088px">1.00</span>
<span class="c n" style="left:1224px">36.00</span>
<span class="c u" style="left:1360px">STORE</span>
<span class="c n" style="left:1496px">5,164.00</span>
</div>
<div class="a row" style="top:472px">
<span class="c n1" style="left:7.200000000000003px">1.00</span>
<span class="c " style="left:136px">839172</span>
<span class="c " style="left:272px">1-839172</span>
<span class="c e" style="left:408px">aboyn6i@va.gov</span>
<span class="c o" style="left:544px">839172ITA_7316520191001<span class="el">...</span></span>
<span class="c d" style="left:680px">27-05-2021, 02:00:00.000</span>
<span class="c n" style="left:816px">5.00</span>
<span class="c n" style="left:952px">39.00</span>
<span class="c n1" style="left:1088px">1.00</span>
<span class="c n" style="left:1224px">39.00</span>
<span class="c u" style="left:1360px">STORE</span>
<span class="c n" style="left:1496px">5,430.00</span>
</div>
<div class="a row" style="top:505px">
<span class="c n1" style="left:7.200000000000003px">1.00</span>
<span class="c " style="left:136px">839172</span>
<span class="c " style="left:272px">1-839172</span>
<span class="c e" style="left:408px">aboyn6i@va.gov</span>
<span class="c o" style="left:544px">839172ITA_7316520191001<span class="el">...</span></span>
<span class="c d" style="left:680px">27-05-2021, 02:00:00.000</span>
<span class="c n" style="left:816px">7.00</span>
<span class="c n" style="left:952px">24.00</span>
<span class="c n1" style="left:1088px">1.00</span>
<span class="c n" style="left:1224px">24.00</span>
<span class="c u" style="left:1360px">STORE</span>
<span class="c n" style="left:1496px">6,026.00</span>
</div>
<div class="a row" style="top:538px">
<span class="c n1" style="left:7.200000000000003px">1.00</span>
<span class="c " style="left:136px">839172</span>
<span class="c " style="left:272px">1-839172</span>
<span class="c e" style="left:408px">aboyn6i@va.gov</span>
<span class="c o" style="left:544px">839172ITA_7316520191001<span class="el">...</span></span>
<span class="c d" style="left:680px">27-05-2021, 02:00:00.000</span>
<span class="c n" style="left:816px">6.00</span>
<span class="c n" style="left:952px">39.00</span>
<span class="c n1" style="left:1088px">1.00</span>
<span class="c n" style="left:1224px">39.00</span>
<span class="c u" style="left:1360px">STORE</span>
<span class="c n" style="left:1496px">5,037.00</span>
</div>
<div class="a row" style="top:571px">
<span class="c n1" style="left:7.200000000000003px">1.00</span>
<span class="c " style="left:136px">839172</span>
<span class="c " style="left:272px">1-839172</span>
<span class="c e" style="left:408px">aboyn6i@va.gov</span>
<span class="c o" style="left:544px">839172ITA_7316520191029<span class="el">...</span></span>
<span class="c d" style="left:680px">24-06-2021, 02:00:00.000</span>
<span class="c n" style="left:816px">4.00</span>
<span class="c n" style="left:952px">85.00</span>
<span class="c n1" style="left:1088px">1.00</span>
<span class="c n" style="left:1224px">85.00</span>
<span class="c u" style="left:1360px">STORE</span>
<span class="c n" style="left:1496px">430.00</span>
</div>
<div class="a row" style="top:604px">
<span class="c n1" style="left:7.200000000000003px">1.00</span>
<span class="c " style="left:136px">839172</span>
<span class="c " style="left:272px">1-839172</span>
<span class="c e" style="left:408px">aboyn6i@va.gov</span>
<span class="c o" style="left:544px">839172ITA_7316520191030<span class="el">...</span></span>
<span class="c d" style="left:680px">25-06-2021, 02:00:00.000</span>
<span class="c n1" style="left:816px">1.00</span>
<span class="c n" style="left:952px">35.00</span>
<span class="c n" style="left:1088px">0.00</span>
<span class="c n" style="left:1224px">0.00</span>
<span class="c u" style="left:1360px">STORE</span>
<span class="c n" style="left:1496px">430.00</span>
</div>
<div class="a row" style="top:637px">
<span class="c n1" style="left:7.200000000000003px">1.00</span>
<span class="c " style="left:136px">839172</span>
<span class="c " style="left:272px">1-839172</span>
<span class="c e" style="left:408px">aboyn6i@va.gov</span>
<span class="c o" style="left:544px">839172ITA_7316520191030<span class="el">...</span></span>
<span class="c d" style="left:680px">25-06-2021, 02:00:00.000</span>
<span class="c n" style="left:816px">2.00</span>
<span class="c n" style="left:952px">39.00</span>
<span class="c n1" style="left:1088px">1.00</span>
<span class="c n" style="left:1224px">39.00</span>
<span class="c u" style="left:1360px">STORE</span>
<span class="c n" style="left:1496px">6,013.00</span>
</div>
<div class="a row" style="top:670px">
<span class="c n1" style="left:7.200000000000003px">1.00</span>
<span class="c " style="left:136px">839172</span>
<span class="c " style="left:272px">1-839172</span>
<span class="c e" style="left:408px">aboyn6i@va.gov</span>
<span class="c o" style="left:544px">839172ITA_7316520191030<span class="el">...</span></span>
<span class="c d" style="left:680px">25-06-2021, 02:00:00.000</span>
<span class="c n" style="left:816px">3.00</span>
<span class="c n" style="left:952px">59.00</span>
<span class="c n1" style="left:1088px">1.00</span>
<span class="c n" style="left:1224px">59.00</span>
<span class="c u" style="left:1360px">STORE</span>
<span class="c n" style="left:1496px">5,352.00</span>
</div>
<div class="a row" style="top:703px">
<span class="c n1" style="left:7.200000000000003px">1.00</span>
<span class="c " style="left:136px">155661</span>
<span class="c " style="left:272px">1-155661</span>
<span class="c e" style="left:408px">hkik3f@ftc.gov</span>
<span class="c o" style="left:544px">155661ITA_7365220180413<span class="el">...</span></span>
<span class="c d" style="left:680px">08-12-2019, 01:00:00.000</span>
<span class="c n" style="left:816px">19.00</span>
<span class="c n" style="left:952px">100.00</span>
<span class="c n1" style="left:1088px">1.00</span>
<span class="c n" style="left:1224px">100.00</span>
<span class="c u" style="left:1360px">STORE</span>
<span class="c n" style="left:1496px">3,098.00</span>
</div>
<div class="a" style="left:1592px;top:110px;width:4px;height:62px;border-radius:2px;background:#cdcdcd"></div>
<div class="a" style="left:0;top:717px;width:988px;height:5px;border-radius:2.5px;background:rgba(182,182,182,0.755)"></div>
</div>
</body></html>
